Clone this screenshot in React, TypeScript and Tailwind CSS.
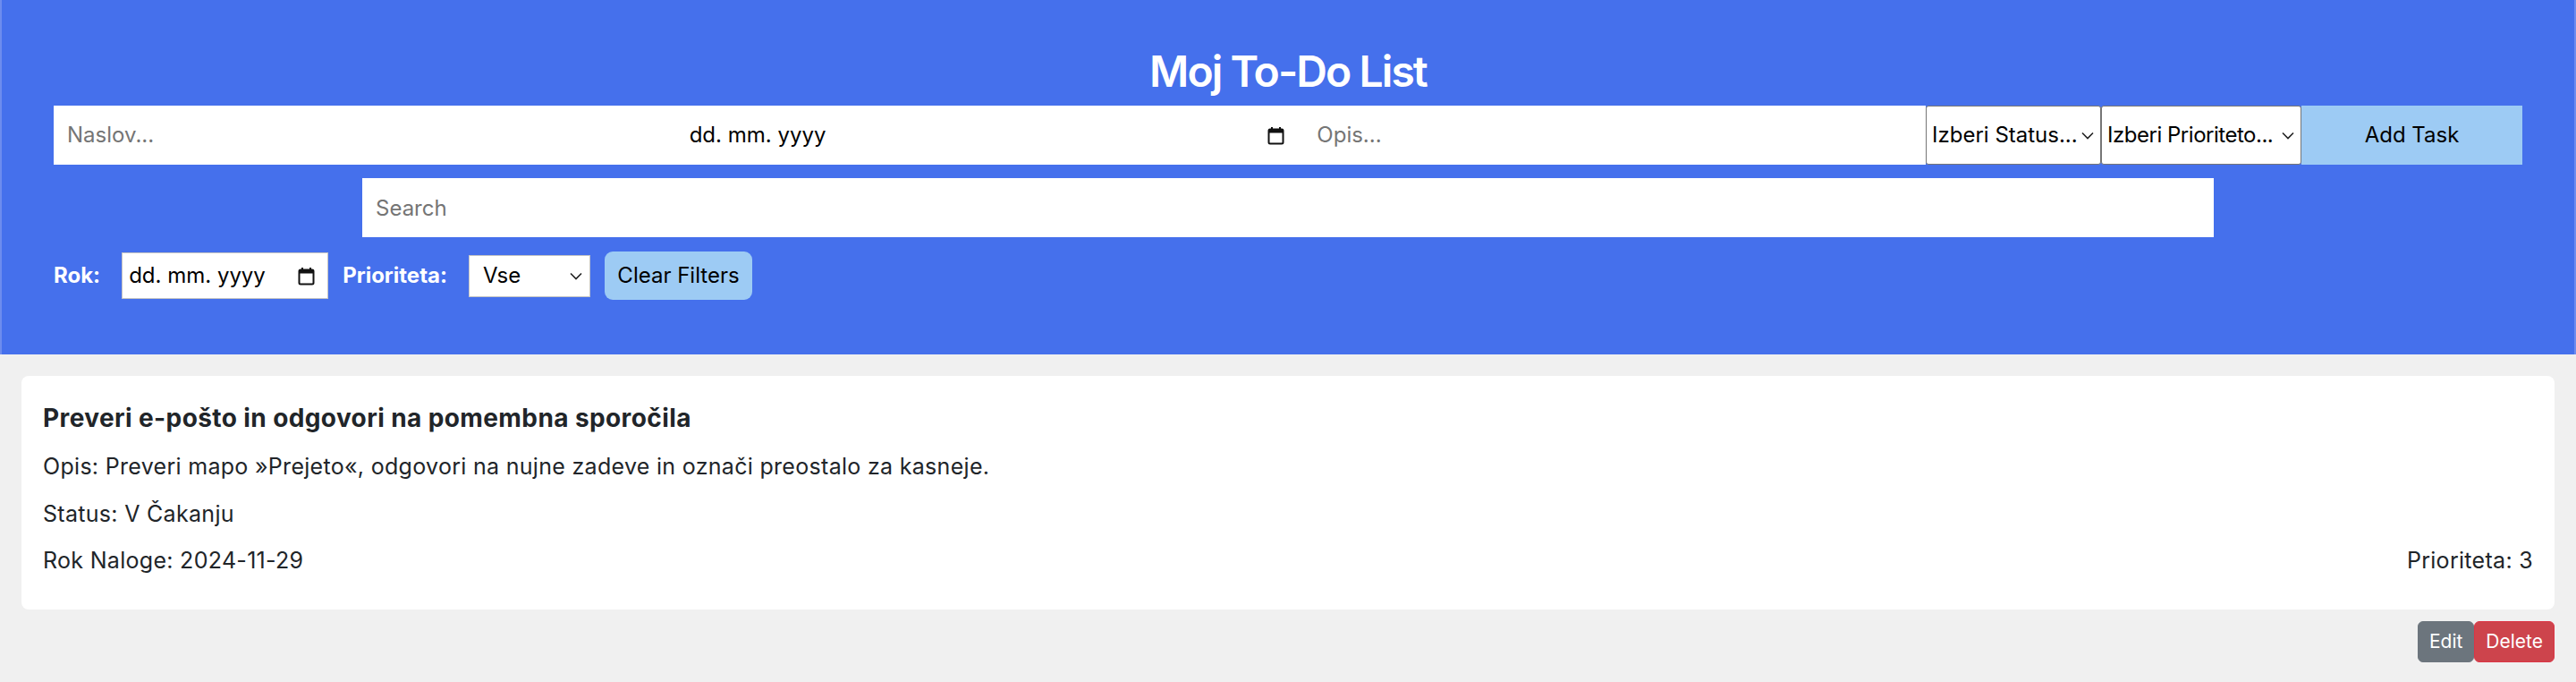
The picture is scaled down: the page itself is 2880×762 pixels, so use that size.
import React from "react";

const font = { fontFamily: "Inter, 'Noto Sans', sans-serif" };

const CalendarIcon = () => (
	<svg width="19" height="21" viewBox="0 0 19 21" fill="none">
		<rect x="1.5" y="3.5" width="16" height="16" rx="1.5" stroke="#111" strokeWidth="2" />
		<rect x="1.5" y="3.5" width="16" height="4" fill="#111" />
		<rect x="4" y="1" width="2" height="4" fill="#111" />
		<rect x="13" y="1" width="2" height="4" fill="#111" />
	</svg>
);

const Chevron = () => (
	<svg width="14" height="9" viewBox="0 0 14 9" fill="none" className="shrink-0">
		<polyline points="1,1.5 7,7.5 13,1.5" stroke="#222" strokeWidth="1.6" />
	</svg>
);

const App = () => {
	return (
		<div className="min-h-[762px] bg-[#f0f0f0] text-[#212529]" style={font}>
			<div className="bg-[#4570ec] border-x-2 border-[#6d8cee] px-[58px] pt-[51px] pb-[61px]">
				<h1 className="m-0 text-center text-[48px] leading-[58px] font-semibold tracking-[-0.04em] text-white">
					Moj To-Do List
				</h1>

				<div className="mt-[9px] flex h-[66px] text-[24px]">
					<input
						className="flex-1 min-w-0 bg-white px-[15px] outline-none placeholder:text-[#757575]"
						placeholder="Naslov..."
					/>
					<div className="flex-1 min-w-0 bg-white pl-[15px] pr-[21px] flex items-center justify-between text-black">
						<span>dd. mm. yyyy</span>
						<CalendarIcon />
					</div>
					<input
						className="flex-1 min-w-0 bg-white px-[15px] outline-none placeholder:text-[#757575]"
						placeholder="Opis..."
					/>
					<div className="w-[196px] shrink-0 bg-white border-[1.5px] border-[#767676] rounded-[3px] pl-[6px] pr-[7px] flex items-center justify-between gap-[4px] whitespace-nowrap overflow-hidden text-black">
						<span>Izberi Status...</span>
						<Chevron />
					</div>
					<div className="w-[224px] shrink-0 bg-white border-[1.5px] border-[#767676] rounded-[3px] pl-[6px] pr-[7px] flex items-center justify-between gap-[4px] whitespace-nowrap overflow-hidden text-black">
						<span className="tracking-[-0.02em]">Izberi Prioriteto...</span>
						<Chevron />
					</div>
					<button className="w-[247px] shrink-0 bg-[#9dcbf4] text-black">Add Task</button>
				</div>

				<div className="mt-[15px] flex justify-center">
					<input
						className="w-[2070px] h-[66px] bg-white px-[15px] text-[24px] outline-none placeholder:text-[#757575]"
						placeholder="Search"
					/>
				</div>

				<div className="mt-[16px] flex items-center gap-[16px] text-[24px]">
					<label className="font-bold text-white mr-[8px]">Rok:</label>
					<div className="w-[231px] h-[52px] bg-white border-[1.5px] border-[#c4c4c4] pl-[7px] pr-[14px] flex items-center justify-between text-black">
						<span>dd. mm. yyyy</span>
						<CalendarIcon />
					</div>
					<label className="font-bold text-white mr-[8px]">Prioriteta:</label>
					<div className="w-[136px] h-[47px] bg-white border-[1.5px] border-[#c4c4c4] pl-[15px] pr-[8px] flex items-center justify-between text-black">
						<span>Vse</span>
						<Chevron />
					</div>
					<button className="w-[165px] h-[54px] rounded-[9px] bg-[#9dcbf4] text-black">Clear Filters</button>
				</div>
			</div>

			<div className="mx-[24px] mt-[24px] bg-white rounded-[8px] px-[24px] pt-[30px] pb-[40px]">
				<h3 className="m-0 text-[28px] leading-[34px] font-bold tracking-[0.4px]">
					Preveri e-pošto in odgovori na pomembna sporočila
				</h3>
				<p className="mt-[23px] text-[25px] leading-[29px] tracking-[0.3px]">
					Opis: Preveri mapo »Prejeto«, odgovori na nujne zadeve in označi preostalo za kasneje.
				</p>
				<p className="mt-[24px] text-[25px] leading-[29px] tracking-[0.3px]">Status: V Čakanju</p>
				<div className="mt-[23px] flex justify-between text-[25px] leading-[29px] tracking-[0.3px]">
					<span>Rok Naloge: 2024-11-29</span>
					<span>Prioriteta: 3</span>
				</div>
			</div>

			<div className="mt-[13px] mr-[24px] flex justify-end">
				<button className="h-[46px] px-[12px] rounded-[6px] border border-[#6c757d] bg-[#6c757d] text-white text-[21px]">
					Edit
				</button>
				<button className="h-[46px] px-[12px] rounded-[6px] border border-[#dc3545] bg-[#cd444c] text-white text-[21px]">
					Delete
				</button>
			</div>
		</div>
	);
};

export default App;
